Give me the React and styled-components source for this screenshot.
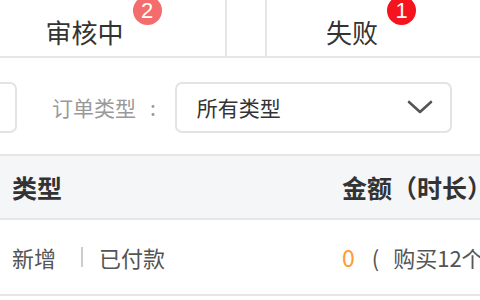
import React from "react";
import styled, { createGlobalStyle } from "styled-components";

const Global = createGlobalStyle`
  html, body { margin: 0; padding: 0; background: #fff; }
  body {
    width: 480px; height: 300px; overflow: hidden;
    font-family: "Noto Sans CJK SC", "Noto Sans", sans-serif;
  }
`;

const Page = styled.div`
  width: 480px;
  height: 300px;
  overflow: hidden;
  background: #fff;
`;

const TabBar = styled.div`
  display: flex;
  height: 58px;
  border-bottom: 2px solid #e6e6e6;
  box-sizing: border-box;
`;

const Tab = styled.div`
  flex: 0 0 auto;
  box-sizing: border-box;
  width: ${(p) => p.$w}px;
  margin-left: ${(p) => p.$ml || 0}px;
  border-right: ${(p) => (p.$divider ? "2px solid #e6e6e6" : "none")};
  display: flex;
  align-items: center;
  justify-content: center;
  padding-top: 8px;
`;

const TabLabel = styled.span`
  position: relative;
  font-size: 26px;
  color: #333;
  line-height: 1;
`;

const Badge = styled.span`
  position: absolute;
  left: calc(100% + ${(p) => p.$gap}px);
  top: -23px;
  width: 29px;
  height: 29px;
  border-radius: 50%;
  background: ${(p) => p.$bg};
  color: #fff;
  font-family: "Liberation Sans", Arial, sans-serif;
  font-size: 22px;
  line-height: 29px;
  text-align: center;
`;

const FilterRow = styled.div`
  display: flex;
  align-items: center;
  height: 98px;
  border-bottom: 2px solid #e6e6e6;
  box-sizing: border-box;
  padding-top: 2px;
`;

const InputBox = styled.div`
  box-sizing: border-box;
  height: 51px;
  width: 60px;
  margin-left: -43px;
  border: 2px solid #e3e3e3;
  border-radius: 7px;
`;

const FilterLabel = styled.span`
  margin-left: 35px;
  font-size: 21px;
  color: #999;
  white-space: nowrap;
`;

const Colon = styled.span`
  display: inline-block;
  margin-left: 14px;
  margin-right: 19px;
`;

const Select = styled.div`
  box-sizing: border-box;
  width: 277px;
  height: 51px;
  border: 2px solid #e3e3e3;
  border-radius: 7px;
  display: flex;
  align-items: center;
  justify-content: space-between;
  padding: 0 17px 0 20px;
  font-size: 21px;
  color: #333;
`;

const TableHead = styled.div`
  display: flex;
  align-items: center;
  height: 64px;
  background: #f5f6f8;
  border-bottom: 2px solid #e6e6e6;
  box-sizing: border-box;
  font-size: 25px;
  font-weight: 700;
  color: #333;
`;

const Row = styled.div`
  display: flex;
  align-items: center;
  height: 76px;
  border-bottom: 2px solid #e6e6e6;
  box-sizing: border-box;
  font-size: 22px;
  color: #555;
`;

const Cell = styled.div`
  box-sizing: border-box;
  flex: 0 0 auto;
  width: ${(p) => p.$w}px;
  padding-left: 12px;
  white-space: nowrap;
  display: flex;
  align-items: center;
`;

const Sep = styled.span`
  display: inline-block;
  width: 2px;
  height: 20px;
  background: #ccc;
  margin: 0 16px 0 25px;
`;

const Amount = styled.span`
  color: #ff9a2e;
  font-size: 23px;
`;

const Paren = styled.span`
  margin: 0 14px 0 17px;
`;

export default function App() {
  return (
    <Page>
      <Global />
      <TabBar>
        <Tab $w={283} $ml={-56} $divider>
          <TabLabel>
            审核中
            <Badge $bg="#f56c6c" $gap={9}>2</Badge>
          </TabLabel>
        </Tab>
        <Tab $w={40} $divider />
        <Tab $w={170}>
          <TabLabel>
            失败
            <Badge $bg="#f5141e" $gap={9}>1</Badge>
          </TabLabel>
        </Tab>
      </TabBar>
      <FilterRow>
        <InputBox />
        <FilterLabel>
          订单类型<Colon>:</Colon>
        </FilterLabel>
        <Select>
          <span>所有类型</span>
          <svg width="26" height="16" viewBox="0 0 26 16">
            <path d="M2 3 L13 13 L24 3" fill="none" stroke="#555" strokeWidth="2.6" strokeLinecap="round" strokeLinejoin="round" />
          </svg>
        </Select>
      </FilterRow>
      <TableHead>
        <Cell $w={330}>类型</Cell>
        <Cell $w={200}>金额（时长）</Cell>
      </TableHead>
      <Row>
        <Cell $w={330}>
          新增<Sep />已付款
        </Cell>
        <Cell $w={200}>
          <Amount>0</Amount>
          <Paren>(</Paren>购买12个月)
        </Cell>
      </Row>
    </Page>
  );
}
